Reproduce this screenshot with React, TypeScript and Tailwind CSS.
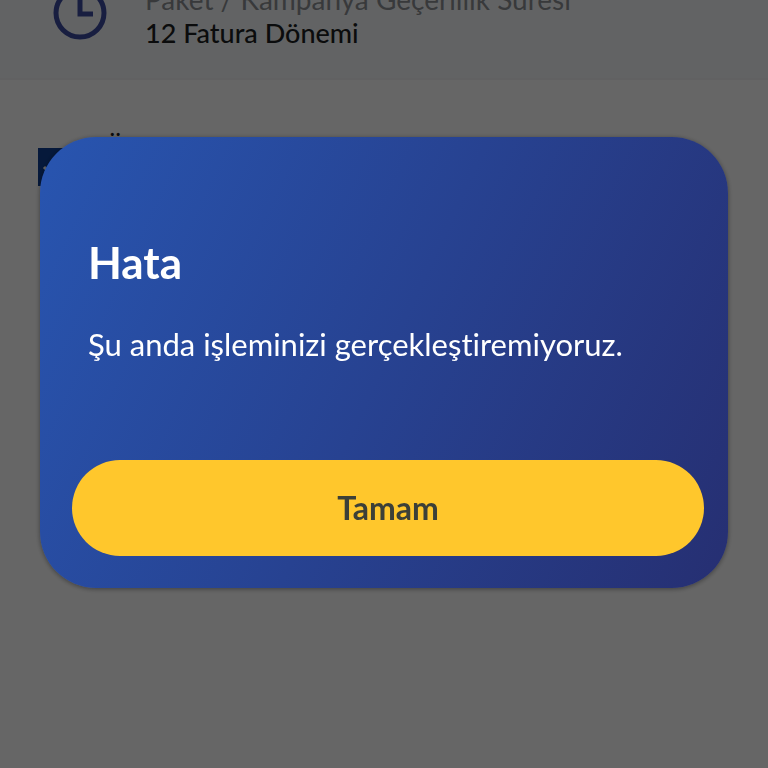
import { useState } from 'react';

function ClockIcon() {
  return (
    <svg viewBox="0 0 54 54" className="mb-2.5 size-[54px] shrink-0" fill="none" stroke="#3c4ca0" strokeWidth="5" aria-hidden="true">
      <circle cx="27" cy="27" r="24" />
      <path d="M27 12v16h13" />
    </svg>
  );
}

interface ErrorDialogProps {
  title: string;
  message: string;
  onClose: () => void;
}

function ErrorDialog({ title, message, onClose }: ErrorDialogProps) {
  return (
    <div className="fixed inset-0 flex items-start bg-black/60 px-10 pt-[137px]">
      <div
        role="alertdialog"
        aria-modal="true"
        aria-labelledby="error-title"
        aria-describedby="error-message"
        className="w-full rounded-[56px] bg-linear-[115deg] from-[#2855b0] to-[#262f72] pt-[95px] pr-6 pb-8 pl-8 shadow-[0_1px_5px_rgba(0,0,0,0.4)]"
      >
        <div className="px-4">
          <h1 id="error-title" className="text-[44px] leading-[60px] font-bold text-white">
            {title}
          </h1>
          <p id="error-message" className="mt-8 text-[31px] leading-10 text-white">
            {message}
          </p>
        </div>
        <button
          type="button"
          onClick={onClose}
          className="mt-24 h-24 w-full rounded-full bg-[#ffc72c] text-[32px] leading-10 font-bold text-[#3c4038]"
        >
          Tamam
        </button>
      </div>
    </div>
  );
}

export default function App() {
  const [open, setOpen] = useState(true);

  return (
    <main className="min-h-screen bg-white font-['Lato','Noto_Sans',sans-serif] [font-variant-ligatures:none]">
      {/* Campaign summary, scrolled partly out of view */}
      <section className="flex h-20 items-end gap-[38px] overflow-hidden border-b-2 border-[#f2f3f5] bg-[#f6f8fa] px-[53px] pb-7">
        <ClockIcon />
        <div className="text-[27px] leading-[34px] whitespace-nowrap">
          <p className="text-[28px] text-[#8d9094]">Paket / Kampanya Geçerlilik Süresi</p>
          <p className="font-medium text-[#1c1e22]">12 Fatura Dönemi</p>
        </div>
      </section>

      <label className="flex items-start gap-7 px-[38px] pt-[51px] text-[28px] leading-[34px] text-[#1c1e22]">
        <span className="grid shrink-0 pt-[17px]">
          <input
            type="checkbox"
            defaultChecked
            className="col-start-1 row-start-1 size-[38px] appearance-none bg-[#0f3f94]"
          />
          <svg viewBox="0 0 38 38" className="pointer-events-none col-start-1 row-start-1 size-[38px]" fill="none" stroke="#fff" strokeWidth="3" aria-hidden="true">
            <path d="M6 19l9 9 17-18" />
          </svg>
        </span>
        <span>Ön Bilgilendirme</span>
      </label>

      {open && (
        <ErrorDialog
          title="Hata"
          message="Şu anda işleminizi gerçekleştiremiyoruz."
          onClose={() => setOpen(false)}
        />
      )}
    </main>
  );
}
